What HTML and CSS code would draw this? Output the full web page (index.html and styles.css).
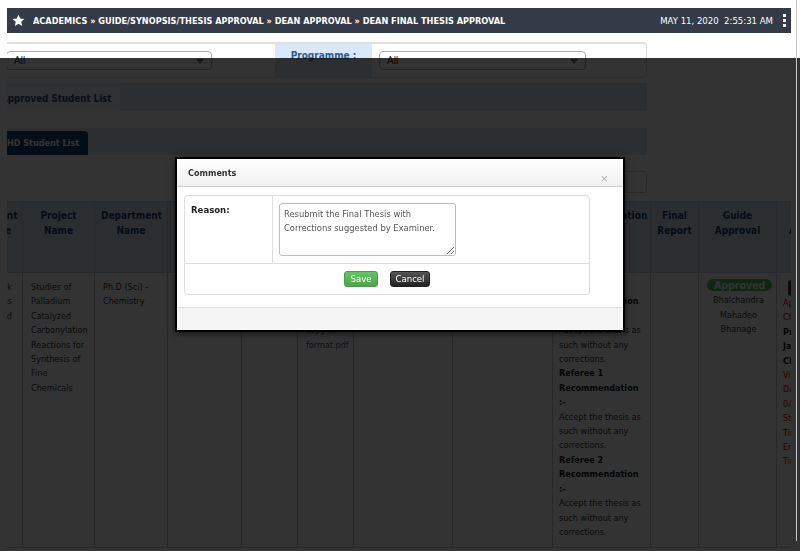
FILE: index.html
```html
<!DOCTYPE html>
<html>
<head>
	<title>Dean Final Thesis Approval</title>
	<meta http-equiv="content-type" content="text/html;charset=utf-8">
	<link rel="stylesheet" href="styles.css">
</head>
<body>
	<!-- top breadcrumb bar -->
	<div class="topbar">
		<svg class="star" viewBox="0 0 24 24"><path d="M12 1.2l3.2 7.1 7.8.8-5.9 5.2 1.7 7.7L12 18.1 5.2 22l1.7-7.7L1 9.1l7.8-.8z" fill="#fff"/></svg>
		<span class="crumbs">ACADEMICS &raquo; GUIDE/SYNOPSIS/THESIS APPROVAL &raquo; DEAN APPROVAL &raquo; DEAN FINAL THESIS APPROVAL</span>
		<span class="clock">MAY 11, 2020&nbsp;&nbsp;2:55:31 AM</span>
		<span class="kebab"><i></i><i></i><i></i></span>
	</div>

	<div class="viewport">
		<div class="canvas">
			<!-- filters -->
			<div class="filters">
				<div class="select sel-dept">All<b class="caret"></b></div>
				<div class="lbl">Programme :</div>
				<div class="select sel-prog">All<b class="caret"></b></div>
			</div>

			<div class="tabbar first"><span class="tab">Approved Student List</span></div>
			<div class="tabbar second"><span class="tab active">PHD Student List</span></div>

			<div class="searchrow"><input class="search" type="text"></div>

			<!-- student list -->
			<table class="grid">
				<colgroup>
					<col style="width:52px"><col style="width:72px"><col style="width:73px"><col style="width:74px">
					<col style="width:56px"><col style="width:56px"><col style="width:99px"><col style="width:100px">
					<col style="width:98px"><col style="width:48px"><col style="width:78px"><col style="width:70px">
				</colgroup>
				<tr>
					<th>Student Name</th>
					<th>Project Name</th>
					<th>Department Name</th>
					<th>Guide Name</th>
					<th>Synopsis</th>
					<th>Final Thesis</th>
					<th>Examiner Details</th>
					<th>Referee Details</th>
					<th>Recommendation Status</th>
					<th>Final Report</th>
					<th>Guide Approval</th>
					<th>Dean Approval</th>
				</tr>
				<tr>
					<td class="c-name">Vinayak<br>Vishwas<br>Prasad</td>
					<td>Studies of Palladium Catalyzed Carbonylation Reactions for Synthesis of Fine Chemicals</td>
					<td>Ph.D (Sci) - Chemistry</td>
					<td>Prof. B. M.<br>Bhanage</td>
					<td><a href="#">Synopsis.pdf</a></td>
					<td><a href="#">Final<br>Thesis<br>soft<br>copy in<br>format.pdf</a></td>
					<td>Dr. A. K. Singh<br>IIT Bombay</td>
					<td>Dr. R. V. Jayaram<br>ICT Mumbai</td>
					<td class="c-rec">
						<b>Examiner<br>Recommendation<br>:-</b><br>
						Accept the thesis as such without any corrections.<br>
						<b>Referee 1 Recommendation :-</b><br>
						Accept the thesis as such without any corrections.<br>
						<b>Referee 2 Recommendation :-</b><br>
						Accept the thesis as such without any corrections.
					</td>
					<td></td>
					<td class="c-guide">
						<span class="badge">Approved</span><br>
						Bhalchandra Mahadeo Bhanage
					</td>
					<td class="c-dean">
						<span class="btn-act">Action</span>
						<span class="red">Approval<br>Chairman :</span><br>
						<b>Prof.<br>Jayant<br>Chavan</b><br>
						<span class="red">Viva<br>Date:<br>04-06-2020<br>Start<br>Time:<br>End<br>Time:</span>
					</td>
				</tr>
			</table>
		</div>
	</div>

	<div class="overlay"></div>
	<div class="vscroll"></div>

	<!-- comments dialog -->
	<div class="modal">
		<div class="modal-head">
			<span class="modal-title">Comments</span>
			<span class="close">&times;</span>
		</div>
		<div class="modal-body">
			<div class="form-box">
				<div class="form-row">
					<div class="form-lbl">Reason:</div>
					<div class="form-val">
						<textarea class="reason">Resubmit the Final Thesis with Corrections suggested by Examiner.</textarea>
					</div>
				</div>
				<div class="form-btns">
					<button type="button" class="btn btn-save">Save</button>
					<button type="button" class="btn btn-cancel">Cancel</button>
				</div>
			</div>
		</div>
		<div class="modal-foot"></div>
	</div>
</body>
</html>
```
FILE: styles.css
```css
* {
	box-sizing: border-box;
}
body {
	margin: 0;
	background: #fff;
	font-family: "DejaVu Sans Condensed", "Liberation Sans", sans-serif;
	font-stretch: condensed;
	font-size: 9px;
	color: #333;
}
.topbar {
	display: flex;
	align-items: center;
	height: 25px;
	margin: 8px 9px 0 7px;
	padding: 0 5px;
	background: #353a47;
	color: #fff;
}
.star {
	width: 13px;
	height: 13px;
	margin-right: 8px;
	flex: none;
}
.crumbs {
	font-weight: bold;
	font-size: 9.1px;
	white-space: nowrap;
}
.clock {
	margin-left: auto;
	font-size: 9.5px;
	white-space: nowrap;
}
.kebab {
	display: flex;
	flex-direction: column;
	gap: 2px;
	margin-left: 10px;
}
.kebab i {
	display: block;
	width: 3px;
	height: 3px;
	background: #fff;
}
.viewport {
	width: 784px;
	margin-left: 7px;
	overflow: hidden;
}
.canvas {
	width: 1000px;
	margin-left: -37px;
}
.filters {
	display: flex;
	align-items: center;
	width: 660px;
	height: 36px;
	margin: 9px 0 0 17px;
	border: 1px solid #ddd;
	border-top: 2px solid #e0e0e0;
	border-radius: 4px;
}
.select {
	position: relative;
	height: 19px;
	line-height: 17px;
	padding-left: 7px;
	border: 1px solid #aaa;
	border-radius: 4px;
	background: #fff;
	color: #333;
	font-family: "Liberation Sans", sans-serif;
	font-size: 10px;
}
.sel-dept {
	margin-left: 18px;
	width: 206px;
}
.sel-prog {
	margin-left: 7px;
	width: 207px;
}
.caret {
	position: absolute;
	right: 7px;
	top: 7px;
	border: 4px solid transparent;
	border-top: 5px solid #777;
	border-bottom: 0;
}
.lbl {
	align-self: stretch;
	width: 97px;
	margin-left: 63px;
	padding-top: 6px;
	line-height: 12px;
	background: #dbe8f9;
	color: #2a5b95;
	font-weight: bold;
	font-size: 10px;
	text-align: center;
}
.tabbar {
	display: flex;
	align-items: flex-end;
	width: 660px;
	margin-left: 17px;
	background: #d9e8fa;
}
.tabbar.first {
	height: 28px;
	margin-top: 5px;
}
.tabbar.second {
	height: 27px;
	margin-top: 17px;
}
.tab {
	width: 123px;
	height: 24px;
	line-height: 24px;
	margin-left: 10px;
	padding-left: 4px;
	border-radius: 4px 4px 0 0;
	background: #eef2f7;
	color: #1f4e7e;
	font-weight: bold;
	font-size: 9.7px;
}
.tab.active {
	width: 91px;
	background: #0e4470;
	color: #fff;
	font-size: 9px;
}
.searchrow {
	display: flex;
	justify-content: flex-end;
	width: 660px;
	margin: 16px 0 0 17px;
}
.search {
	width: 140px;
	height: 22px;
	border: 1px solid #ccc;
	border-radius: 3px;
}
table.grid {
	width: 876px;
	margin-top: 8px;
	border-collapse: collapse;
	table-layout: fixed;
	font-size: 9px;
}
.grid th {
	position: relative;
	height: 71px;
	padding: 6px 6px 0;
	vertical-align: top;
	background: #d5e5f6;
	border: 1px solid #c0d0e2;
	color: #133d66;
	font-size: 10px;
	line-height: 15px;
}
.grid th::after {
	content: "";
	position: absolute;
	right: 6px;
	top: 33px;
	width: 5px;
	height: 9px;
	background:
		linear-gradient(to top right, transparent 50%, #e0e0e0 50%) 0 0 / 3px 4px no-repeat,
		linear-gradient(to top left, transparent 50%, #e0e0e0 50%) 2px 0 / 3px 4px no-repeat,
		linear-gradient(to bottom right, transparent 50%, #e0e0e0 50%) 0 5px / 3px 4px no-repeat,
		linear-gradient(to bottom left, transparent 50%, #e0e0e0 50%) 2px 5px / 3px 4px no-repeat;
}
.grid td {
	height: 273px;
	padding: 7px 6px 8px 8px;
	vertical-align: top;
	border: 1px solid #c8c8c8;
	line-height: 14.4px;
}
.grid a {
	color: #1c5d99;
	text-decoration: none;
}
.grid td.c-name {
	text-align: right;
	padding-right: 10px;
}
.grid td.c-rec {
	padding-left: 6px;
	color: #333;
}
.c-rec b {
	color: #111;
}
.grid td.c-guide {
	padding-top: 6px;
	text-align: center;
}
.badge {
	display: inline-block;
	height: 12px;
	line-height: 12px;
	margin-bottom: 2px;
	padding: 0 7px;
	border-radius: 6px;
	background: #5cb85c;
	color: #fff;
	font-weight: bold;
	font-size: 10.5px;
}
.grid td.c-dean {
	padding: 7px 4px 0 6px;
}
.btn-act {
	display: block;
	width: 40px;
	height: 16px;
	margin-left: 5px;
	border-radius: 3px;
	background: #333;
	color: #fff;
	line-height: 16px;
	text-align: center;
}
.red {
	color: #c00;
}
.c-dean b {
	color: #111;
}
.overlay {
	position: fixed;
	top: 58px;
	left: 0;
	right: 0;
	bottom: 0;
	background: rgba(0, 0, 0, .8);
}
.vscroll {
	position: fixed;
	top: 0;
	bottom: 10px;
	right: 3px;
	width: 1px;
	background: #c8c8c8;
}
.modal {
	position: absolute;
	left: 175px;
	top: 157px;
	width: 450px;
	height: 175px;
	border: 2px solid #000;
	background: #fff;
	box-shadow: 0 2px 6px rgba(0, 0, 0, .5);
}
.modal-head {
	display: flex;
	align-items: center;
	height: 28px;
	padding-left: 11px;
	border-bottom: 1px solid #ccc;
	background: linear-gradient(#fff, #f0f0f0);
}
.modal-title {
	font-weight: bold;
	color: #333;
}
.close {
	align-self: flex-end;
	margin-left: auto;
	margin-right: 15px;
	font-family: "Liberation Sans", sans-serif;
	font-size: 13px;
	line-height: 14px;
	color: #b5b5b5;
}
.modal-body {
	padding: 8px 33px 12px 7px;
}
.form-box {
	border: 1px solid #ddd;
	border-radius: 4px;
}
.form-row {
	display: flex;
	height: 68px;
	border-bottom: 1px solid #ddd;
}
.form-lbl {
	width: 88px;
	padding: 8px 6px;
	line-height: 12px;
	border-right: 1px solid #ddd;
	font-weight: bold;
	font-size: 9.5px;
	color: #222;
}
.reason {
	display: block;
	width: 177px;
	height: 53px;
	margin: 7px 0 0 6px;
	padding: 3px 4px;
	border: 1px solid #bbb;
	border-radius: 3px;
	font-family: inherit;
	font-stretch: condensed;
	font-size: 9.3px;
	line-height: 14px;
	color: #555;
}
.form-btns {
	display: flex;
	justify-content: center;
	gap: 12px;
	padding: 7px 0;
}
.btn {
	height: 16px;
	padding: 0;
	border-radius: 3px;
	font-family: inherit;
	font-stretch: condensed;
	font-size: 9.5px;
	color: #fff;
	line-height: 14px;
}
.btn-save {
	width: 34px;
	border: 1px solid #4a9c48;
	background: linear-gradient(#62c462, #51a351);
}
.btn-cancel {
	width: 40px;
	border: 1px solid #222;
	background: linear-gradient(#555, #222);
}
.modal-foot {
	height: 23px;
	border-top: 1px solid #ddd;
	background: #f5f5f5;
}
```
